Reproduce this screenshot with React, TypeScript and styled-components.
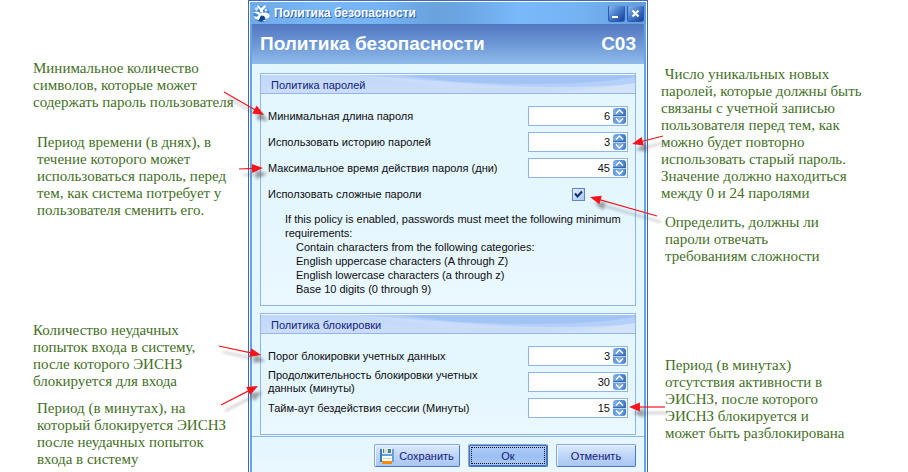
import React, { useState } from "react";
import styled, { createGlobalStyle } from "styled-components";

const GlobalStyle = createGlobalStyle`
  * { box-sizing: border-box; }
  body { margin: 0; background: #fff; overflow: hidden; }
  button, input { font: inherit; color: inherit; }
`;

const Page = styled.main`
  display: grid;
  grid-template-columns: minmax(0, 248fr) 400px minmax(0, 260fr);
  min-height: 100vh;
  font: 11px/14px "Liberation Sans", Arial, sans-serif;
  color: #0c0c10;
`;

const Notes = styled.aside<{ $top: number; $left: number }>`
  padding: ${(p) => p.$top}px 0 0 ${(p) => p.$left}px;
  font: 15px/17px "Liberation Serif", "Times New Roman", serif;
  color: #44701f;
`;

const Note = styled.p<{ $gap?: number; $indent?: boolean }>`
  margin: ${(p) => p.$gap ?? 0}px 0 0 ${(p) => (p.$indent ? 4 : 0)}px;
  white-space: pre;
`;

const Dialog = styled.section`
  position: relative;
  min-height: 100vh;
  border: 1px solid #3f66b8;
  border-bottom: 0;
  padding: 1px 1px 0;
  background: #fff;
  display: flex;
  flex-direction: column;
`;

const Frame = styled.div`
  display: flex;
  flex-direction: column;
  flex: 1;
  padding: 0 2px;
  background: #6aa4e0;
`;

const TitleBar = styled.header`
  display: flex;
  flex: none;
  align-items: center;
  gap: 2px;
  height: 22px;
  margin: 0 -2px;
  padding: 0 2px 0 3px;
  background: linear-gradient(90deg, #6fabe8 0, #79b6f6 18%, #77b4f4 32%, #69a2dc 47%, #6ca7e4 55%, #7ab9fa 68%, #75b2f2 84%, #649cdc 100%);
`;

const TitleText = styled.h1`
  flex: 1;
  margin: 0 0 0 2px;
  font-size: 12px;
  line-height: 16px;
  font-weight: bold;
  color: #fff;
  text-shadow: 1px 1px 0 #2c62ae;
`;

const WindowButton = styled.button`
  display: grid;
  place-items: center;
  width: 17px;
  height: 17px;
  padding: 0;
  border: 1px solid #2b5ab0;
  border-top-color: #6d9bdc;
  border-radius: 3px;
  background: linear-gradient(135deg, #8ab8ee 0, #4a80cc 45%, #153f9c 100%);
`;

const Banner = styled.div`
  display: flex;
  align-items: center;
  justify-content: space-between;
  height: 40px;
  flex: none;
  padding: 0 8px;
  background: linear-gradient(#5277be, #6c97d6 50%, #90bcec);
  color: #fff;
  font-size: 19px;
  line-height: 24px;
  font-weight: bold;
`;

const Content = styled.form`
  display: flex;
  flex-direction: column;
  flex: 1;
  background: #e4f6fe;
`;

const Groups = styled.div`
  display: flex;
  flex-direction: column;
  gap: 7px;
  padding: 9px 8px 1px;
`;

const Group = styled.section`
  border: 1px solid #8fb6e8;
  background: linear-gradient(#eef9ff, #e4f6fe 24px, #e4f6fe 60%, #ebf8ff);
`;

const GroupTitle = styled.h2`
  position: relative;
  height: 20px;
  margin: 0;
  padding: 2px 10px 0;
  border-top: 1px solid #f5faff;
  border-bottom: 1px solid #8fb6e8;
  background: linear-gradient(#bfd7f9, #cbdefb);
  color: #14207c;
  font-size: 11px;
  line-height: 16px;
  font-weight: normal;
  overflow: hidden;
  span { position: relative; }
`;

const Swoosh = styled.svg`
  position: absolute;
  inset: 0;
  width: 100%;
  height: 100%;
`;

const Rows = styled.div<{ $bottom: number }>`
  padding: 9px 7px ${(p) => p.$bottom}px;
`;

const Row = styled.div`
  display: grid;
  grid-template-columns: minmax(0, 1fr) 100px;
  align-items: center;
  height: 26px;
  label { max-width: 240px; line-height: 13px; }
`;

const Spinner = styled.div`
  display: flex;
  align-items: center;
  height: 20px;
  padding-right: 1px;
  border: 1px solid #8fb6e8;
  background: #fff;
`;

const NumberBox = styled.input`
  flex: 1;
  min-width: 0;
  height: 18px;
  padding: 0 3px 0 0;
  border: 0;
  outline: 0;
  background: transparent;
  text-align: right;
`;

const Steps = styled.div`
  display: grid;
  grid-template-rows: 8px 8px;
  width: 13px;
  border-radius: 3px;
  overflow: hidden;
`;

const Step = styled.button<{ $down?: boolean }>`
  display: grid;
  place-items: center;
  padding: 0;
  border: 0;
  border-${(p) => (p.$down ? "top" : "bottom")}: 1px solid ${(p) => (p.$down ? "#b9d3f5" : "#3767ae")};
  background: ${(p) => (p.$down ? "linear-gradient(100deg, #5f92d8, #82afea 50%, #3f72c0)" : "linear-gradient(100deg, #7fb0ec, #6398dc 50%, #3b6fbe)")};
`;

const CheckCell = styled.div`
  display: grid;
  place-items: center;
  height: 100%;
`;

const CheckBox = styled.input`
  appearance: none;
  width: 13px;
  height: 13px;
  margin: 0;
  border: 1px solid #5c88c8;
  background: linear-gradient(135deg, #e2edfd, #a9c8f4);
  grid-area: 1 / 1;
  &:not(:checked) + svg { display: none; }
`;

const CheckMark = styled.svg`
  grid-area: 1 / 1;
  pointer-events: none;
`;

const Help = styled.div`
  margin: 5px 0 0 17px;
  p { margin: 0; }
  ul { margin: 0; padding: 0 0 0 11px; list-style: none; }
`;

const Footer = styled.footer`
  display: flex;
  justify-content: flex-end;
  gap: 8px;
  flex: 1;
  padding: 7px 8px 5px;
  border-top: 1px solid #8fb6e8;
  background: linear-gradient(#e4f6fe, #eaf7ff);
`;

const Action = styled.button<{ $wide?: boolean; $primary?: boolean }>`
  display: flex;
  align-items: center;
  justify-content: center;
  gap: 5px;
  width: ${(p) => (p.$wide ? 86 : 80)}px;
  height: 23px;
  padding: 0;
  border: 1px solid #83a8e0;
  border-right-color: #4b78c4;
  border-bottom-color: #4b78c4;
  border-radius: 2px;
  background: linear-gradient(${(p) => (p.$primary ? "#b4d0f8, #9dc0f3 50%, #a9caf7" : "#dbe9fd, #bcd4f8 55%, #a8c6f3")});
  box-shadow: ${(p) => (p.$primary ? "inset 0 0 0 1px #3f70c4" : "inset 1px 1px 0 #eff6ff")};
  color: #14207c;
  outline: ${(p) => (p.$primary ? "1px dotted #111" : "none")};
  outline-offset: -4px;
`;

const Arrows = styled.svg`
  position: absolute;
  top: -1px;
  left: -1px;
  width: 400px;
  height: 472px;
  overflow: visible;
  pointer-events: none;
`;

function Field({ id, label, value }: { id: string; label: string; value: number }) {
  const [n, setN] = useState(String(value));
  const step = (d: number) => setN(String(Math.max(0, (Number(n) || 0) + d)));
  return (
    <Row>
      <label htmlFor={id}>{label}</label>
      <Spinner>
        <NumberBox id={id} inputMode="numeric" value={n} onChange={(e) => setN(e.target.value)} />
        <Steps>
          <Step type="button" aria-label="Увеличить" onClick={() => step(1)}>
            <svg width="9" height="5" viewBox="0 0 9 5"><path d="M1 4.5 4.5 1 8 4.5" fill="none" stroke="#fff" strokeWidth="1.4" /></svg>
          </Step>
          <Step type="button" $down aria-label="Уменьшить" onClick={() => step(-1)}>
            <svg width="9" height="5" viewBox="0 0 9 5"><path d="M1 .5 4.5 4 8 .5" fill="none" stroke="#fff" strokeWidth="1.4" /></svg>
          </Step>
        </Steps>
      </Spinner>
    </Row>
  );
}

function Heading({ children }: { children: string }) {
  return (
    <GroupTitle>
      <Swoosh viewBox="0 0 374 18" preserveAspectRatio="none" aria-hidden="true">
        <path d="M76 0C130 3 170 12 216 18H374V0Z" fill="#c9dcfb" />
        <path d="M84 0C150 3 190 8 250 11 300 13 340 12 374 9V0Z" fill="#b5d0f8" />
        <path d="M140 0C180 7 230 9 280 9 320 9 350 6 374 2V0Z" fill="#a2c4f4" />
        <path d="M290 18C325 15 350 12 374 8V18Z" fill="#d3e3fc" />
      </Swoosh>
      <span>{children}</span>
    </GroupTitle>
  );
}

const ARROWS = [
  [224, 92, 264, 115],
  [239, 169, 263, 168],
  [219, 346, 261, 355],
  [221, 405, 258, 386],
  [663, 136, 632, 144],
  [657, 216, 590, 197],
  [665, 407, 629, 407],
];

function Arrow({ p }: { p: number[] }) {
  const [x1, y1, x2, y2] = p;
  const angle = (Math.atan2(y2 - y1, x2 - x1) * 180) / Math.PI;
  const len = Math.hypot(x2 - x1, y2 - y1);
  return (
    <g transform={`translate(${x2} ${y2}) rotate(${angle})`}>
      <path d={`M${-len} 0H-8`} stroke="currentColor" strokeWidth="1.2" />
      <path d="M0 0-11-4.5V4.5Z" fill="currentColor" />
    </g>
  );
}

export default function App() {
  const [complex, setComplex] = useState(true);
  return (
    <>
      <GlobalStyle />
      <Page>
        <Notes $top={60} $left={33}>
          <Note>{"Минимальное количество\nсимволов, которые может\nсодержать пароль пользователя"}</Note>
          <Note $gap={23} $indent>{"Период времени (в днях), в\nтечение которого может\nиспользоваться пароль, перед\nтем, как система потребует у\nпользователя сменить его."}</Note>
          <Note $gap={103}>{"Количество неудачных\nпопыток входа в систему,\nпосле которого ЭИСНЗ\nблокируется для входа"}</Note>
          <Note $gap={10} $indent>{"Период (в минутах), на\nкоторый блокируется ЭИСНЗ\nпосле неудачных попыток\nвхода в систему"}</Note>
        </Notes>

        <Dialog>
          <Frame>
            <TitleBar>
              <svg width="17" height="17" viewBox="0 0 17 17" aria-hidden="true">
                <circle cx="8.5" cy="9" r="8" fill="#3f86d6" />
                <path d="M3 14A8 8 0 0 0 14 14.500L11 10H6Z" fill="#123f94" />
                <path d="M0 8C3 5 6 7 8 8.500 11 7 14 7 16.500 9.500 17 12 15 14 12.500 14 12 11 10 10.500 8.500 10.500 7 11 7 13 6 15 3 15 1 13 1 11 3 12 5 12 5.500 10 4 8.500 2 8 0 8Z" fill="#fff" />
                <path d="M5 0 8 3 12 0 13 2 10 5V8L7 7V5L4 2Z" fill="#fff" />
                <circle cx="3.500" cy="4" r="1.700" fill="#c9e6ff" />
                <circle cx="13" cy="5" r="1.500" fill="#c9e6ff" />
                <path d="M9 15.500 12 16 14.500 14Z" fill="#fff" />
              </svg>
              <TitleText>Политика безопасности</TitleText>
              <WindowButton type="button" aria-label="Свернуть">
                <svg width="15" height="15" viewBox="0 0 15 15"><path d="M3 10H9V12H3Z" fill="#fff" /></svg>
              </WindowButton>
              <WindowButton type="button" aria-label="Закрыть">
                <svg width="15" height="15" viewBox="0 0 15 15"><path d="M4.500 4.500 10.500 10.500M10.500 4.500 4.500 10.500" stroke="#fff" strokeWidth="2.200" /></svg>
              </WindowButton>
            </TitleBar>
            <Banner>
              <span>Политика безопасности</span>
              <span>C03</span>
            </Banner>
            <Content onSubmit={(e) => e.preventDefault()}>
              <Groups>
                <Group>
                  <Heading>Политика паролей</Heading>
                  <Rows $bottom={9}>
                    <Field id="min-length" label="Минимальная длина пароля" value={6} />
                    <Field id="history" label="Использовать историю паролей" value={3} />
                    <Field id="max-age" label="Максимальное время действия пароля (дни)" value={45} />
                    <Row>
                      <label htmlFor="complex">Исползовать сложные пароли</label>
                      <CheckCell>
                        <CheckBox id="complex" type="checkbox" checked={complex} onChange={(e) => setComplex(e.target.checked)} />
                        <CheckMark width="9" height="9" viewBox="0 0 9 9"><path d="M1 3.500 3.500 6.500 8 1.500" fill="none" stroke="#14306e" strokeWidth="2" /></CheckMark>
                      </CheckCell>
                    </Row>
                    <Help>
                      <p>If this policy is enabled, passwords must meet the following minimum<br />requirements:</p>
                      <ul>
                        <li>Contain characters from the following categories:</li>
                        <li>English uppercase characters (A through Z)</li>
                        <li>English lowercase characters (a through z)</li>
                        <li>Base 10 digits (0 through 9)</li>
                      </ul>
                    </Help>
                  </Rows>
                </Group>
                <Group>
                  <Heading>Политика блокировки</Heading>
                  <Rows $bottom={13}>
                    <Field id="threshold" label="Порог блокировки учетных данных" value={3} />
                    <Field id="duration" label="Продолжительность блокировки учетных данных (минуты)" value={30} />
                    <Field id="timeout" label="Тайм-аут бездействия сессии (Минуты)" value={15} />
                  </Rows>
                </Group>
              </Groups>
              <Footer>
                <Action type="button" $wide>
                  <svg width="14" height="16" viewBox="0 0 14 16" aria-hidden="true">
                    <path d="M0 1H14V14H0Z" fill="#6aa0d8" />
                    <path d="M0 1H2V14H0Z" fill="#3d78b8" />
                    <path d="M2 0H12V6H2Z" fill="#e6f0ea" />
                    <path d="M3 1H11V5H3Z" fill="#4d7f92" />
                    <path d="M4 1H8V5H4Z" fill="#cfe0dc" />
                    <path d="M2 8H12V13H2Z" fill="#fff" />
                    <path d="M3 10H11V11H3Z" fill="#c4cedd" />
                    <path d="M2 13H12V16H2Z" fill="#ff8a00" />
                  </svg>
                  Сохранить
                </Action>
                <Action type="submit" $primary>Ок</Action>
                <Action type="button">Отменить</Action>
              </Footer>
            </Content>
          </Frame>
          <Arrows viewBox="248 0 400 472" aria-hidden="true">
            <defs>
              <filter id="soft" x="-20%" y="-20%" width="140%" height="140%"><feGaussianBlur stdDeviation="1.5" /></filter>
            </defs>
            <g color="#555" opacity="0.55" filter="url(#soft)" transform="translate(4 6)">
              {ARROWS.map((p, i) => <Arrow key={i} p={p} />)}
            </g>
            <g color="#f5141c">
              {ARROWS.map((p, i) => <Arrow key={i} p={p} />)}
            </g>
          </Arrows>
        </Dialog>

        <Notes $top={66} $left={13}>
          <Note>{" Число уникальных новых\nпаролей, которые должны быть\nсвязаны с учетной записью\nпользователя перед тем, как\nможно будет повторно\nиспользовать старый пароль.\nЗначение должно находиться\nмежду 0 и 24 паролями"}</Note>
          <Note $gap={12} $indent>{"Определить, должны ли\nпароли отвечать\nтребованиям сложности"}</Note>
          <Note $gap={92} $indent>{"Период (в минутах)\nотсутствия активности в\nЭИСНЗ, после которого\nЭИСНЗ блокируется и\nможет быть разблокирована"}</Note>
        </Notes>
      </Page>
    </>
  );
}
